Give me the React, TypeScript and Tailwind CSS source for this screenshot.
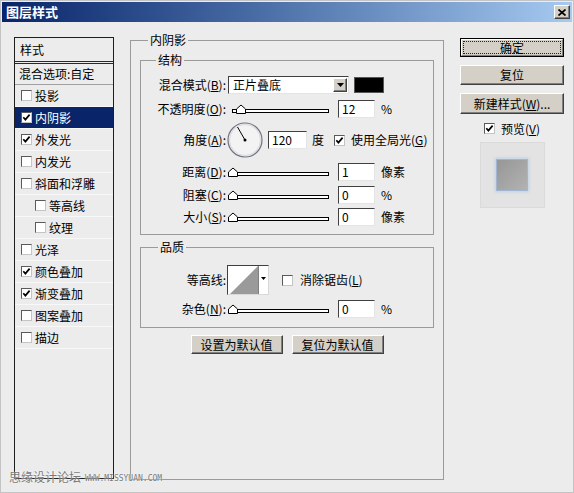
import React from "react"

const ui = "font-['Noto_Sans_CJK_SC',sans-serif] text-[12px] leading-[16px] text-black"

const sunken = "border border-t-[#404040] border-l-[#404040] border-r-[#e4e4e4] border-b-[#e4e4e4] bg-white"
const raised = "border border-t-white border-l-white border-r-[#404040] border-b-[#404040] bg-[#d4d0c8] shadow-[inset_-1px_-1px_#808080]"

function Box({ on }: { on?: boolean }) {
  return (
    <span className="inline-flex h-[11px] w-[11px] shrink-0 items-center justify-center border border-t-[#5a5a5a] border-l-[#5a5a5a] border-r-[#c4c4c4] border-b-[#c4c4c4] bg-white">
      {on && (
        <svg width="9" height="9" viewBox="0 0 9 9">
          <path d="M1.3 4.2 L3.4 6.6 L7.6 1.6" fill="none" stroke="#000" strokeWidth="1.7" />
        </svg>
      )}
    </span>
  )
}

function Key({ k }: { k: string }) {
  return (
    <>
      (<u>{k}</u>)
    </>
  )
}

function Slider({ at }: { at: number }) {
  return (
    <svg width="104" height="10" viewBox="0 0 104 10" className="shrink-0">
      <rect x="4.5" y="5.5" width="96" height="3" fill="#fff" stroke="#000" />
      <path d={`M${at + 0.5} 9.5 V5 L${at + 5} 1 L${at + 9.5} 5 V9.5 Z`} fill="#fff" stroke="#000" />
    </svg>
  )
}

function Field({ v }: { v: string }) {
  return <div className={`flex h-[18px] w-[37px] shrink-0 items-center pl-[3px] ${sunken}`}>{v}</div>
}

function SliderRow({ label, at, v, unit, cls }: { label: React.ReactNode; at: number; v: string; unit: string; cls: string }) {
  return (
    <div className={`flex items-center ${cls}`}>
      <div className="w-[85px] shrink-0 text-right">{label}</div>
      <div className="ml-[2px]">
        <Slider at={at} />
      </div>
      <div className="ml-[6px]">
        <Field v={v} />
      </div>
      <span className="ml-[6px]">{unit}</span>
    </div>
  )
}

const items = [
  { t: "投影" },
  { t: "内阴影", on: true, sel: true },
  { t: "外发光", on: true },
  { t: "内发光" },
  { t: "斜面和浮雕" },
  { t: "等高线", ind: true },
  { t: "纹理", ind: true },
  { t: "光泽" },
  { t: "颜色叠加", on: true },
  { t: "渐变叠加", on: true },
  { t: "图案叠加" },
  { t: "描边" },
]

export default function App() {
  return (
    <div className={`relative h-[493px] w-[574px] overflow-hidden border border-[#c4c4c4] bg-[#ececec] p-[1px] ${ui}`}>
      {/* title bar */}
      <div className="flex h-[20px] items-center justify-between bg-gradient-to-r from-[#0a246a] to-[#a6caf0] pl-[4px] pr-[2px]">
        <span className="text-[13px] font-bold leading-[16px] text-white">图层样式</span>
        <button className={`flex h-[14px] w-[16px] items-center justify-center ${raised}`}>
          <svg width="8" height="7" viewBox="0 0 8 7">
            <path d="M0.5 0.5 L7.5 6.5 M7.5 0.5 L0.5 6.5" stroke="#000" strokeWidth="1.7" />
          </svg>
        </button>
      </div>

      <div className="flex items-start pl-[12px] pt-[10px]">
        {/* left list */}
        <div className="mt-[5px] flex h-[442px] w-[100px] shrink-0 flex-col border border-[#1e1e1e]">
          <div className="flex h-[26px] shrink-0 items-center border-b-[3px] border-double border-[#2a2a2a] pl-[5px]">样式</div>
          <div className="flex h-[21px] shrink-0 items-center border-b border-[#a0a0a0] pl-[4px]">混合选项:自定</div>
          {items.map((it) => (
            <div
              key={it.t}
              className={`flex h-[22px] shrink-0 items-center gap-[3px] border-b border-[#f8f8f8] ${it.ind ? "pl-[20px]" : "pl-[6px]"} ${it.sel ? "bg-[#0a246a] text-white" : ""}`}
            >
              <Box on={it.on} />
              <span>{it.t}</span>
            </div>
          ))}
        </div>

        {/* middle group */}
        <fieldset className="ml-[16px] h-[448px] w-[314px] shrink-0 border border-[#9a9a9a] px-[9px]">
          <legend className="ml-[8px] px-[2px] leading-[16px]">内阴影</legend>

          <fieldset className="mt-[4px] border border-[#9a9a9a] pb-[8px]">
            <legend className="ml-[15px] px-[2px] leading-[16px]">结构</legend>

            <div className="mt-[8px] flex h-[18px] items-center">
              <div className="w-[85px] shrink-0 text-right">
                混合模式<Key k="B" />:
              </div>
              <div className={`ml-[2px] flex h-[18px] w-[121px] items-center justify-between pl-[4px] pr-[1px] ${sunken}`}>
                <span>正片叠底</span>
                <div className={`flex h-[14px] w-[14px] items-center justify-center ${raised}`}>
                  <svg width="7" height="4" viewBox="0 0 7 4">
                    <path d="M0 0 H7 L3.5 4 Z" fill="#000" />
                  </svg>
                </div>
              </div>
              <div className="ml-[5px] h-[16px] w-[30px] border border-[#555] bg-black" />
            </div>

            <SliderRow cls="mt-[6px] h-[18px]" label={<>不透明度<Key k="O" />:</>} at={8} v="12" unit="%" />

            <div className="mt-[4px] flex h-[36px] items-center">
              <div className="w-[85px] shrink-0 text-right">
                角度<Key k="A" />:
              </div>
              <svg width="36" height="36" viewBox="0 0 36 36" className="ml-[1px] shrink-0">
                <circle cx="18" cy="18" r="17" fill="#f3f3f3" stroke="#6e7282" strokeWidth="1.2" />
                <circle cx="18" cy="18" r="15.5" fill="none" stroke="#d8d8dc" />
                <path d="M18 18 L10.5 5" stroke="#000" strokeWidth="1" />
                <circle cx="18" cy="18" r="1.5" fill="#000" />
              </svg>
              <div className={`ml-[5px] flex h-[18px] w-[39px] items-center pl-[3px] ${sunken}`}>120</div>
              <span className="ml-[5px]">度</span>
              <div className="ml-[10px] flex items-center gap-[6px]">
                <Box on />
                <span>
                  使用全局光<Key k="G" />
                </span>
              </div>
            </div>

            <SliderRow cls="mt-[5px] h-[18px]" label={<>距离<Key k="D" />:</>} at={0} v="1" unit="像素" />
            <SliderRow cls="mt-[5px] h-[18px]" label={<>阻塞<Key k="C" />:</>} at={0} v="0" unit="%" />
            <SliderRow cls="mt-[4px] h-[18px]" label={<>大小<Key k="S" />:</>} at={0} v="0" unit="像素" />
          </fieldset>

          <fieldset className="mt-[4px] border border-[#9a9a9a] pb-[9px]">
            <legend className="ml-[17px] px-[2px] leading-[16px]">品质</legend>

            <div className="mt-[10px] flex h-[30px] items-center">
              <div className="w-[85px] shrink-0 text-right">等高线:</div>
              <div className="ml-[1px] flex h-[30px] w-[42px] border border-t-[#404040] border-l-[#404040] border-r-[#d8d8d8] border-b-[#d8d8d8] bg-white">
                <svg width="30" height="28" viewBox="0 0 30 28" className="shrink-0">
                  <polygon points="2,28 30,0 30,28" fill="#9a9a9a" />
                </svg>
                <div className="flex w-[10px] items-start justify-center border-l border-[#808080] pt-[11px]">
                  <svg width="5" height="3" viewBox="0 0 5 3">
                    <path d="M0 0 H5 L2.5 3 Z" fill="#000" />
                  </svg>
                </div>
              </div>
              <div className="ml-[13px] flex items-center gap-[7px]">
                <Box />
                <span>
                  消除锯齿<Key k="L" />
                </span>
              </div>
            </div>

            <SliderRow cls="mt-[5px] h-[18px]" label={<>杂色<Key k="N" />:</>} at={0} v="0" unit="%" />
          </fieldset>

          <div className="mt-[7px] flex justify-center gap-[9px]">
            <button className={`flex h-[19px] w-[92px] items-center justify-center ${raised}`}>设置为默认值</button>
            <button className={`flex h-[19px] w-[92px] items-center justify-center ${raised}`}>复位为默认值</button>
          </div>
        </fieldset>

        {/* right column */}
        <div className="ml-[16px] mt-[6px] flex w-[104px] shrink-0 flex-col items-center">
          <button className="h-[19px] w-[104px] border border-black bg-[#d4d0c8]">
            <div className="flex h-full items-center border border-t-white border-l-white border-r-[#808080] border-b-[#808080] p-[1px]">
              <div className="flex h-full w-full items-center justify-center border border-dotted border-[#222] leading-[12px]">
                确定
              </div>
            </div>
          </button>
          <button className={`mt-[8px] flex h-[20px] w-[104px] items-center justify-center ${raised}`}>复位</button>
          <button className={`mt-[8px] flex h-[21px] w-[104px] items-center justify-center ${raised}`}>
            新建样式(<u>W</u>)...
          </button>
          <div className="mt-[8px] flex h-[13px] items-center gap-[6px]">
            <Box on />
            <span>
              预览<Key k="V" />
            </span>
          </div>
          <div className="mt-[7px] flex h-[66px] w-[65px] items-center justify-center border border-[#dadada] bg-[#e3e3e3]">
            <div className="h-[32px] w-[32px] border border-[#a3b6cf] bg-gradient-to-br from-[#979797] to-[#b2b2b2] shadow-[0_0_3px_1px_#bfd0e6]" />
          </div>
        </div>
      </div>

      {/* watermark */}
      <div className="absolute left-[8px] top-[469px] flex items-end gap-[4px] text-[#7a7a7a] [text-shadow:0_0_2px_#fff]">
        <span className="text-[12px] leading-[14px]">思缘设计论坛</span>
        <span className="font-['DejaVu_Sans_Mono',monospace] text-[8px] leading-[10px]">WWW.MISSYUAN.COM</span>
      </div>
    </div>
  )
}
